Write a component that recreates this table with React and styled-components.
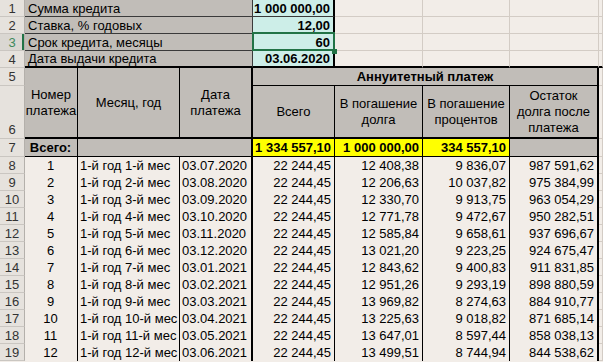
import styled, { createGlobalStyle } from "styled-components";

const GlobalStyle = createGlobalStyle`
  html, body {
    margin: 0;
    padding: 0;
    background: #f2ede8;
    overflow: hidden;
  }
  body {
    font-family: "Liberation Sans", Arial, sans-serif;
    font-size: 13px;
    color: #000;
  }
`;

const Sheet = styled.div`
  display: grid;
  grid-template-columns: 25px 53px 102px 73px 82px 88px 87px 89px 1fr;
  grid-template-rows: repeat(4, 17px) 18px 53px 18px repeat(12, 17px);
  width: 603px;
  height: 362px;
  background: #f2ede8;
  overflow: hidden;
`;

const RowHead = styled.div`
  display: flex;
  justify-content: center;
  align-items: ${(p) => (p.$bottom ? "flex-end" : "center")};
  padding-bottom: ${(p) => (p.$bottom ? "1px" : "0")};
  box-sizing: border-box;
  background: ${(p) => (p.$active ? "#dad7d2" : "#e6e2dd")};
  color: ${(p) => (p.$active ? "#3f8a5c" : "#333")};
  border-bottom: 1px solid #cac6c1;
  border-right: 1px solid #b4b0ab;
  ${(p) => p.$active && "box-shadow: inset -2px 0 0 #217346;"}
`;

const LabelCell = styled.div`
  grid-column: span 3;
  display: flex;
  align-items: center;
  box-sizing: border-box;
  padding-left: 3px;
  background: #c1bdb8;
  border-right: 1px solid #3a3a3a;
  border-bottom: ${(p) => (p.$last ? "2px solid #000" : "1px solid #3a3a3a")};
  white-space: nowrap;
`;

const ValueCell = styled.div`
  position: relative;
  display: flex;
  align-items: center;
  justify-content: flex-end;
  box-sizing: border-box;
  padding-right: 3px;
  background: #cdeee8;
  font-weight: bold;
  border-right: 2px solid #000;
  border-bottom: ${(p) => (p.$last ? "2px solid #000" : "1px solid #3a3a3a")};

  ${(p) =>
    p.$selected &&
    `
    &::before {
      content: "";
      position: absolute;
      left: -1px;
      top: -2px;
      right: -2px;
      bottom: -1px;
      border: 2px solid #217346;
    }
    &::after {
      content: "";
      position: absolute;
      right: -4px;
      bottom: -4px;
      width: 5px;
      height: 5px;
      background: #217346;
      z-index: 2;
    }
  `}
`;

const EmptyCell = styled.div`
  box-sizing: border-box;
  background: #f2ede8;
  border-right: 1px solid #d3ccc5;
  border-bottom: ${(p) => (p.$last ? "2px solid #000" : "1px solid #d3ccc5")};
`;

const HeadCell = styled.div`
  display: flex;
  align-items: center;
  justify-content: center;
  text-align: center;
  box-sizing: border-box;
  padding: 0 1px;
  line-height: 16px;
  background: #c1bdb8;
  font-weight: ${(p) => (p.$bold ? "bold" : "normal")};
  grid-column: span ${(p) => p.$cols || 1};
  grid-row: span ${(p) => p.$rows || 1};
  border-right: ${(p) => (p.$thick ? "2px" : "1px")} solid #000;
  border-bottom: ${(p) => (p.$thickBottom ? "2px" : "1px")} solid #000;
`;

const TotalCell = styled.div`
  display: flex;
  align-items: center;
  justify-content: ${(p) => (p.$center ? "center" : "flex-end")};
  box-sizing: border-box;
  padding: 0 3px 0 2px;
  font-weight: bold;
  white-space: nowrap;
  background: ${(p) => (p.$yellow ? "#ffff00" : "#c1bdb8")};
  grid-column: span ${(p) => p.$cols || 1};
  border-right: ${(p) => (p.$thick ? "2px" : "1px")} solid #000;
  border-bottom: 1px solid #000;
`;

const DataCell = styled.div`
  display: flex;
  align-items: center;
  justify-content: ${(p) =>
    p.$align === "center" ? "center" : p.$align === "left" ? "flex-start" : "flex-end"};
  box-sizing: border-box;
  padding: ${(p) => (p.$align === "left" ? "0 0 0 2px" : "0 3px 0 2px")};
  background: #f2ede8;
  white-space: nowrap;
  overflow: hidden;
  border-right: ${(p) => (p.$thick ? "2px" : "1px")} solid #000;
`;

const inputs = [
  ["Сумма кредита", "1 000 000,00"],
  ["Ставка, % годовых", "12,00"],
  ["Срок кредита, месяцы", "60"],
  ["Дата выдачи кредита", "03.06.2020"],
];

const payments = [
  ["03.07.2020", "12 408,38", "9 836,07", "987 591,62"],
  ["03.08.2020", "12 206,63", "10 037,82", "975 384,99"],
  ["03.09.2020", "12 330,70", "9 913,75", "963 054,29"],
  ["03.10.2020", "12 771,78", "9 472,67", "950 282,51"],
  ["03.11.2020", "12 585,84", "9 658,61", "937 696,67"],
  ["03.12.2020", "13 021,20", "9 223,25", "924 675,47"],
  ["03.01.2021", "12 843,62", "9 400,83", "911 831,85"],
  ["03.02.2021", "12 951,26", "9 293,19", "898 880,59"],
  ["03.03.2021", "13 969,82", "8 274,63", "884 910,77"],
  ["03.04.2021", "13 225,63", "9 018,82", "871 685,14"],
  ["03.05.2021", "13 647,01", "8 597,44", "858 038,13"],
  ["03.06.2021", "13 499,51", "8 744,94", "844 538,62"],
];

export default function App() {
  return (
    <>
      <GlobalStyle />
      <Sheet>
        {inputs.map(([label, value], i) => {
          const last = i === inputs.length - 1;
          return [
            <RowHead key={`h${i}`} $active={i === 2}>
              {i + 1}
            </RowHead>,
            <LabelCell key={`l${i}`} $last={last}>
              {label}
            </LabelCell>,
            <ValueCell key={`v${i}`} $last={last} $selected={i === 2}>
              {value}
            </ValueCell>,
            <EmptyCell key={`e1${i}`} $last={last} />,
            <EmptyCell key={`e2${i}`} $last={last} />,
            <EmptyCell key={`e3${i}`} $last={last} />,
            <EmptyCell key={`e4${i}`} $last={last} />,
          ];
        })}

        <RowHead $bottom>5</RowHead>
        <HeadCell $rows={2} $thickBottom>
          Номер платежа
        </HeadCell>
        <HeadCell $rows={2} $thickBottom>
          Месяц, год
        </HeadCell>
        <HeadCell $rows={2} $thickBottom $thick>
          Дата платежа
        </HeadCell>
        <HeadCell $cols={4} $bold $thick>
          Аннуитетный платеж
        </HeadCell>
        <EmptyCell />

        <RowHead $bottom>6</RowHead>
        <HeadCell $thickBottom>Всего</HeadCell>
        <HeadCell $thickBottom>В погашение долга</HeadCell>
        <HeadCell $thickBottom>В погашение процентов</HeadCell>
        <HeadCell $thickBottom $thick>
          Остаток долга после платежа
        </HeadCell>
        <EmptyCell />

        <RowHead>7</RowHead>
        <TotalCell $center>Всего:</TotalCell>
        <TotalCell $cols={2} $thick />
        <TotalCell $yellow>1 334 557,10</TotalCell>
        <TotalCell $yellow>1 000 000,00</TotalCell>
        <TotalCell $yellow>334 557,10</TotalCell>
        <TotalCell $thick />
        <EmptyCell />

        {payments.map(([date, principal, interest, rest], i) => {
          const month = i + 1;
          return [
            <RowHead key={`rh${i}`}>{i + 8}</RowHead>,
            <DataCell key={`n${i}`} $align="center">
              {month}
            </DataCell>,
            <DataCell key={`m${i}`} $align="left">
              {`1-й год ${month}-й мес`}
            </DataCell>,
            <DataCell key={`d${i}`} $align="left" $thick>
              {date}
            </DataCell>,
            <DataCell key={`t${i}`}>22 244,45</DataCell>,
            <DataCell key={`p${i}`}>{principal}</DataCell>,
            <DataCell key={`i${i}`}>{interest}</DataCell>,
            <DataCell key={`r${i}`} $thick>
              {rest}
            </DataCell>,
            <EmptyCell key={`x${i}`} />,
          ];
        })}
      </Sheet>
    </>
  );
}
